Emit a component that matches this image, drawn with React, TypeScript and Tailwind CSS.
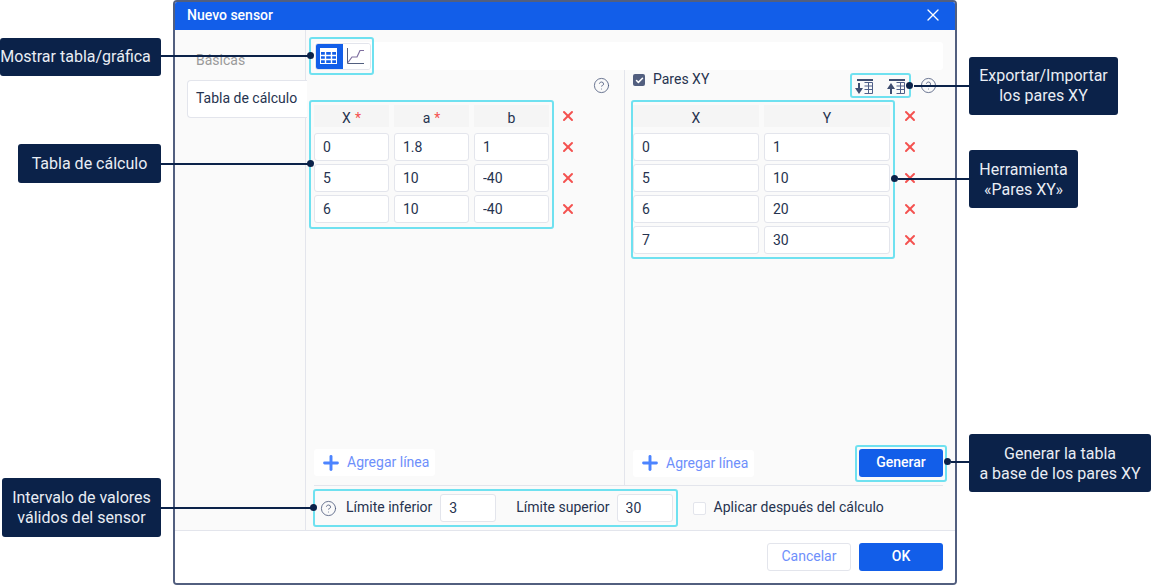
import { CircleHelp, Plus, X, Check } from "lucide-react";

const Help = () => <CircleHelp size={17} strokeWidth={1.2} className="text-[#525f7f]" />;

const TableIcon = () => (
    <svg width="17" height="16" viewBox="0 0 17 16" fill="none">
        <rect x="0" y="0" width="17" height="4" fill="#ffffff" />
        <rect x="0.5" y="0.5" width="16" height="15" stroke="#ffffff" />
        <path d="M5.5 4v12M11.5 4v12M0 7.5h17M0 11.5h17" stroke="#ffffff" strokeWidth="1.4" />
    </svg>
);

const ChartIcon = () => (
    <svg width="17" height="16" viewBox="0 0 17 16" fill="none">
        <path d="M0.5 0v15.5H17" stroke="#525f7f" strokeWidth="1" />
        <path d="M1 14.5 5 9h5l3-6.5h4" stroke="#7f6f9f" strokeWidth="1.2" />
    </svg>
);

const ExportIcon = () => (
    <svg width="18" height="15" viewBox="0 0 18 15" fill="none">
        <rect x="2" y="0" width="16" height="2" fill="#3f4d70" />
        <path d="M9.5 3.5h8v11h-8M9.5 7h8M9.5 10.5h8M13.5 3.5v11" stroke="#4f5f88" strokeWidth="1" />
        <path d="M4 4v6" stroke="#3f4d70" strokeWidth="2" />
        <path d="M0 9h8l-4 6z" fill="#3f4d70" />
    </svg>
);

const ImportIcon = () => (
    <svg width="18" height="15" viewBox="0 0 18 15" fill="none">
        <rect x="2" y="0" width="16" height="2" fill="#3f4d70" />
        <path d="M9.5 3.5h8v11h-8M9.5 7h8M9.5 10.5h8M13.5 3.5v11" stroke="#4f5f88" strokeWidth="1" />
        <path d="M4 9v6" stroke="#3f4d70" strokeWidth="2" />
        <path d="M0 10h8L4 4z" fill="#3f4d70" />
    </svg>
);

const Cell = ({ value, width }: { value: string; width: string }) => (
    <input
        readOnly
        value={value}
        className={`${width} h-7 shrink-0 rounded-[3px] border border-[#e3e5ec] bg-white pl-[8px] text-sm text-[#26334f] outline-none`}
    />
);

const Remove = () => (
    <span className="flex w-[14px] shrink-0 items-center justify-center">
        <X size={16} strokeWidth={3} className="shrink-0 text-[#f4514f]" />
    </span>
);

const HeaderCell = ({ label, width, required }: { label: string; width: string; required?: boolean }) => (
    <div className={`${width} flex h-[22px] shrink-0 items-center justify-center bg-[#f5f5f5] pt-[3px] text-sm text-[#26334f]`}>
        {label}
        {required && <span className="ml-[4px] text-[#f4514f]">*</span>}
    </div>
);

const AddLine = () => (
    <button className="flex h-[27px] w-fit items-center rounded-[3px] bg-white pl-[6px] pr-[6px] pb-[1px] text-sm text-[#6e8ffb]">
        <Plus size={22} strokeWidth={3.2} className="mr-[5px] mt-px text-[#4c84ff]" />
        Agregar línea
    </button>
);

const Callout = ({ className, children }: { className: string; children: React.ReactNode }) => (
    <div className={`absolute flex items-center justify-center rounded-[3px] bg-[#0b2249] text-center text-base leading-5 text-[#e9edf4] ${className}`}>
        {children}
    </div>
);

const Leader = ({ className, dot }: { className: string; dot: string }) => (
    <>
        <div className={`absolute h-[2px] bg-[#0b2249] ${className}`} />
        <div className={`absolute h-[7px] w-[7px] rounded-full bg-[#0b2249] ${dot}`} />
    </>
);

const Outline = ({ className }: { className: string }) => (
    <div className={`pointer-events-none absolute rounded-[3px] border-2 border-[#6fe1f0] ${className}`} />
);

const leftRows = [
    ["0", "1.8", "1"],
    ["5", "10", "-40"],
    ["6", "10", "-40"],
];

const rightRows = [
    ["0", "1"],
    ["5", "10"],
    ["6", "20"],
    ["7", "30"],
];

export default function App() {
    return (
        <div className="relative h-[585px] w-[1153px] overflow-hidden bg-white font-['Roboto',sans-serif] text-sm text-[#26334f]">
            {/* Dialog */}
            <div className="ml-[173px] flex h-[585px] w-[784px] flex-col overflow-hidden rounded-[4px] border-2 border-[#525f7f]">
                <header className="flex h-[28px] shrink-0 items-center justify-between bg-[#125ee9] pb-[2px] pl-[12px] pr-[12px] text-white">
                    <span className="font-medium">Nuevo sensor</span>
                    <X size={20} strokeWidth={1.6} />
                </header>

                <div className="flex min-h-0 flex-1 bg-[#fafafa]">
                    {/* Tabs */}
                    <aside className="flex w-[131px] shrink-0 flex-col border-r border-[#e3e5ec] pl-[12px] pt-[15px]">
                        <div className="flex h-[35px] items-start pl-[9px] pt-[5px] text-[#9a9a9a]">Básicas</div>
                        <div className="flex h-[38px] w-[120px] items-center rounded-l-[4px] border border-r-0 border-[#e3e5ec] bg-white pb-[2px] pl-[8px]">
                            Tabla de cálculo
                        </div>
                    </aside>

                    <main className="flex min-w-0 flex-1 flex-col pt-[12px]">
                        {/* View switch */}
                        <div className="ml-[8px] mr-[12px] flex h-[28px] shrink-0 items-center rounded-[3px] bg-white pl-px">
                            <div className="flex h-[27px] overflow-hidden rounded-[3px] border border-[#e3e5ec]">
                                <span className="flex w-[27px] items-center justify-center bg-[#125ee9] pr-[2px]">
                                    <TableIcon />
                                </span>
                                <span className="flex w-[27px] items-center justify-center bg-white pr-[2px]">
                                    <ChartIcon />
                                </span>
                            </div>
                        </div>

                        <div className="flex min-h-0 flex-1">
                            {/* Calculation table */}
                            <section className="flex w-[319px] shrink-0 flex-col border-r border-[#e3e5ec] pl-[8px]">
                                <div className="flex h-[30px] shrink-0 items-center justify-end pr-[14px]">
                                    <Help />
                                </div>
                                <div className="mt-[5px] flex gap-[5px]">
                                    <HeaderCell label="X" width="w-[75px]" required />
                                    <HeaderCell label="a" width="w-[75px]" required />
                                    <HeaderCell label="b" width="w-[75px]" />
                                    <span className="ml-[7px] flex">
                                        <Remove />
                                    </span>
                                </div>
                                <div className="mt-[6px] flex flex-col gap-[3px]">
                                    {leftRows.map((row, i) => (
                                        <div key={i} className="flex gap-[5px]">
                                            {row.map((value, j) => (
                                                <Cell key={j} value={value} width="w-[75px]" />
                                            ))}
                                            <span className="ml-[7px] flex">
                                                <Remove />
                                            </span>
                                        </div>
                                    ))}
                                </div>
                                <div className="mt-auto pb-[9px]">
                                    <AddLine />
                                </div>
                            </section>

                            {/* XY pairs */}
                            <section className="flex min-w-0 flex-1 flex-col pl-[8px] pr-[12px]">
                                <div className="flex h-[30px] shrink-0">
                                    <label className="flex h-[18px] items-center">
                                        <span className="mt-[2px] flex h-3 w-3 items-center justify-center rounded-[2px] bg-[#525f7f]">
                                            <Check size={9} strokeWidth={4} className="text-white" />
                                        </span>
                                        <span className="ml-[8px]">Pares XY</span>
                                    </label>
                                    <div className="ml-auto mr-[9px] flex items-center gap-[14px] pt-[2px]">
                                        <ExportIcon />
                                        <ImportIcon />
                                    </div>
                                    <div className="flex w-[29px] items-center pl-[6px]">
                                        <Help />
                                    </div>
                                </div>
                                <div className="mt-[5px] flex gap-[5px]">
                                    <HeaderCell label="X" width="w-[126px]" />
                                    <HeaderCell label="Y" width="w-[126px]" />
                                    <span className="ml-[8px] flex">
                                        <Remove />
                                    </span>
                                </div>
                                <div className="mt-[6px] flex flex-col gap-[3px]">
                                    {rightRows.map((row, i) => (
                                        <div key={i} className="flex gap-[5px]">
                                            {row.map((value, j) => (
                                                <Cell key={j} value={value} width="w-[126px]" />
                                            ))}
                                            <span className="ml-[8px] flex">
                                                <Remove />
                                            </span>
                                        </div>
                                    ))}
                                </div>
                                <div className="mt-auto flex items-center justify-between pb-[8px]">
                                    <AddLine />
                                    <button className="h-[28px] w-[84px] rounded-[3px] bg-[#125ee9] pb-[2px] font-medium text-white">
                                        Generar
                                    </button>
                                </div>
                            </section>
                        </div>

                        {/* Valid value limits */}
                        <div className="mx-[8px] mr-[12px] flex h-[45px] shrink-0 items-center border-t border-[#e3e5ec] pl-[6px]">
                            <Help />
                            <span className="mb-[2px] ml-[9px]">Límite inferior</span>
                            <input readOnly value="3" className="ml-[8px] h-7 w-[56px] rounded-[3px] border border-[#e3e5ec] bg-white pl-[8px] outline-none" />
                            <span className="mb-[2px] ml-[20px]">Límite superior</span>
                            <input readOnly value="30" className="ml-[7px] h-7 w-[56px] rounded-[3px] border border-[#e3e5ec] bg-white pl-[8px] outline-none" />
                            <span className="ml-[20px] h-[13px] w-[13px] rounded-[2px] border border-[#e3e5ec] bg-white" />
                            <span className="mb-[2px] ml-[8px]">Aplicar después del cálculo</span>
                        </div>
                    </main>
                </div>

                <footer className="flex h-[53px] shrink-0 items-center justify-end gap-2 border-t border-[#e3e5ec] bg-white pr-[12px]">
                    <button className="h-[28px] w-[84px] rounded-[3px] border border-[#e3e5ec] bg-white pb-[2px] text-[#6e8ffb]">Cancelar</button>
                    <button className="h-[28px] w-[84px] rounded-[3px] bg-[#125ee9] pb-[2px] font-medium text-white">OK</button>
                </footer>
            </div>

            {/* Highlights over the dialog */}
            <Outline className="left-[309px] top-[37px] h-[38px] w-[65px]" />
            <Outline className="left-[309px] top-[100px] h-[129px] w-[245px]" />
            <Outline className="left-[631px] top-[100px] h-[159px] w-[264px]" />
            <Outline className="left-[850px] top-[73px] h-[25px] w-[61px]" />
            <Outline className="left-[855px] top-[445px] h-[37px] w-[92px]" />
            <Outline className="left-[313px] top-[489px] h-[38px] w-[365px]" />

            {/* Leaders */}
            <Leader className="left-[161px] top-[55px] w-[149px]" dot="left-[307px] top-[52px]" />
            <Leader className="left-[161px] top-[163px] w-[149px]" dot="left-[307px] top-[160px]" />
            <Leader className="left-[161px] top-[507px] w-[152px]" dot="left-[310px] top-[504px]" />
            <Leader className="left-[914px] top-[85px] w-[55px]" dot="left-[906px] top-[82px]" />
            <Leader className="left-[898px] top-[178px] w-[71px]" dot="left-[891px] top-[175px]" />
            <Leader className="left-[951px] top-[461px] w-[18px]" dot="left-[944px] top-[458px]" />

            {/* Callouts */}
            <Callout className="left-0 top-[38px] h-[38px] w-[161px] pr-[10px]">Mostrar tabla/gráfica</Callout>
            <Callout className="left-[18px] top-[144px] h-[39px] w-[143px]">Tabla de cálculo</Callout>
            <Callout className="left-[2px] top-[478px] h-[59px] w-[159px]">
                Intervalo de valores
                <br />
                válidos del sensor
            </Callout>
            <Callout className="left-[969px] top-[57px] h-[58px] w-[149px]">
                Exportar/Importar
                <br />
                los pares XY
            </Callout>
            <Callout className="left-[969px] top-[150px] h-[58px] w-[109px] pt-[2px]">
                Herramienta
                <br />
                «Pares XY»
            </Callout>
            <Callout className="left-[969px] top-[434px] h-[58px] w-[182px] pt-[2px]">
                Generar la tabla
                <br />
                a base de los pares XY
            </Callout>
        </div>
    );
}
